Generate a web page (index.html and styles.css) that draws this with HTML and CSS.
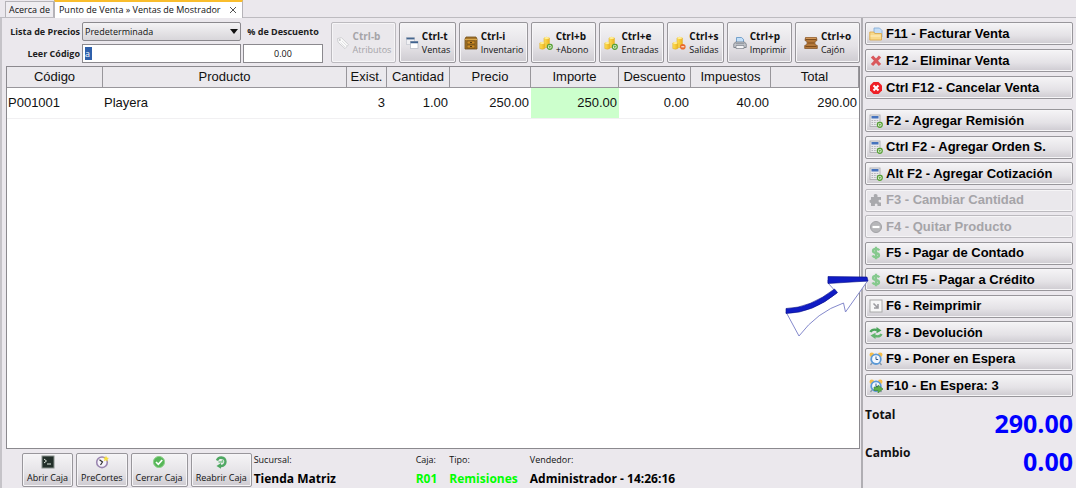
FILE: index.html
```html
<!DOCTYPE html>
<html lang="es">
<head>
<meta charset="utf-8">
<title>Punto de Venta » Ventas de Mostrador</title>
<link rel="stylesheet" href="styles.css">
</head>
<body>
<svg class="defs" aria-hidden="true">
  <defs>
    <linearGradient id="gold" x1="0" x2="1"><stop offset="0" stop-color="#fce056"/><stop offset="1" stop-color="#eeb421"/></linearGradient>
    <symbol id="coins" viewBox="0 0 14 14">
      <path d="M5 2q2.700-1.500 5.400 0v9.500H5z" fill="url(#gold)" stroke="#dfae2c" stroke-width=".6"/>
      <path d="M.8 7q2.300-1.400 5 0v5.500q-2.500 1.300-5 0z" fill="url(#gold)" stroke="#dfae2c" stroke-width=".6"/>
      <ellipse cx="7.700" cy="2.100" rx="2.500" ry="1" fill="#fff09b"/><ellipse cx="3.300" cy="7" rx="2.300" ry=".9" fill="#fff09b"/>
    </symbol>
    <symbol id="plus" viewBox="0 0 6 6"><circle cx="3" cy="3" r="2.300" fill="#fff" stroke="#57a135" stroke-width="1.200"/><path d="M3 1.800v2.400M1.800 3h2.400" stroke="#57a135" stroke-width=".8"/></symbol>
    <symbol id="calc" viewBox="0 0 14 14">
      <rect x="1" y="1" width="10" height="11.500" fill="#e9e9ec" stroke="#a5a5aa" stroke-width=".8"/>
      <rect x="2.500" y="2" width="7" height="2.500" fill="#4673bd"/>
      <path d="M2.500 6.500h7M2.500 8.500h7M2.500 10.500h7" stroke="#b4b4ba" stroke-width="1" stroke-dasharray="1.600 1"/>
      <use href="#plus" x="7.500" y="7.500" width="6.500" height="6.500"/>
    </symbol>
    <symbol id="dollar" viewBox="0 0 14 14"><path d="M10.300 4.400Q9.500 2.900 7 2.900 4 2.900 4 4.900 4 6.500 7 7t3 2.300q0 2-3 2-2.700 0-3.500-1.700M7 .8v12.400" fill="none" stroke="#86c98e" stroke-width="2.300"/></symbol>
    <symbol id="alarm" viewBox="0 0 14 14">
      <circle cx="2.800" cy="2.800" r="2.300" fill="#f5bd4a"/><circle cx="11.200" cy="2.800" r="2.300" fill="#f5bd4a"/>
      <path d="M3 11l-1.500 2M11 11l1.500 2" stroke="#8a98a8" stroke-width="1.300"/>
      <circle cx="7" cy="7.200" r="4.800" fill="#f4f9ff" stroke="#5b99d6" stroke-width="1.800"/>
      <path d="M7 4.500v3h2.200" fill="none" stroke="#345c8c"/>
    </symbol>
  </defs>
</svg>
<div class="app">
  <nav class="tabs">
    <button class="tab">Acerca de</button>
    <div class="tab tab-active"><button class="tab-name">Punto de Venta » Ventas de Mostrador</button><button class="tab-close" aria-label="Cerrar"><svg viewBox="0 0 8 8"><path d="M1 1l6 6M7 1L1 7" stroke="#555" fill="none"/></svg></button></div>
  </nav>
  <div class="workspace">
    <main class="sale">
      <div class="toolbar">
        <form class="entry">
          <label class="entry-label" for="lista">Lista de Precios</label>
          <div class="select-wrap"><select id="lista" class="field select"><option>Predeterminada</option></select></div>
          <label class="entry-label discount-label" for="descuento">% de Descuento</label>
          <label class="entry-label" for="codigo">Leer Código</label>
          <div class="field code-field"><input id="codigo" class="code" value="a"></div>
          <input id="descuento" class="field discount" value="0.00">
        </form>
        <div class="actions">
          <button class="btn action wide-64" disabled><svg class="icon" viewBox="0 0 14 14"><path d="M1.500 2.500l4-.8 7 7-3.500 4-7-6.500z" fill="#fafafa" stroke="#cfcfd2"/><circle cx="3.800" cy="4" r="1" fill="#c6c6ca"/><path d="M6 5l5 5M4.500 6.500l4.500 4.500" stroke="#d6d6da" stroke-width=".7"/></svg><span><b>Ctrl-b</b><br>Atributos</span></button>
          <button class="btn action wide-56"><svg class="icon" viewBox="0 0 14 14"><rect x="1.500" y="1.500" width="8" height="7" fill="#f1f1f4" stroke="#c3c7cf" stroke-width=".7"/><path d="M1.500 2.500h8" stroke="#46678f" stroke-width="1.800"/><rect x="5.500" y="5.500" width="7.500" height="7" fill="#fff" stroke="#b4b9c4" stroke-width=".7"/><path d="M5.500 6.300h7.500" stroke="#3f628f" stroke-width="1.900"/></svg><span><b>Ctrl-t</b><br>Ventas</span></button>
          <button class="btn action wide-68"><svg class="icon" viewBox="0 0 14 14"><path d="M2 1h10l1 2v10H1V3z" fill="#a9782c" stroke="#6d4a14" stroke-width=".8"/><path d="M1 3.500h12" stroke="#d9a94d"/><rect x="3" y="5" width="8" height="3" fill="#d08e27" stroke="#6d4a14" stroke-width=".7"/><rect x="3" y="9" width="8" height="3" fill="#d08e27" stroke="#6d4a14" stroke-width=".7"/><path d="M6 6.500h2M6 10.500h2" stroke="#4e3510"/></svg><span><b>Ctrl-i</b><br>Inventario</span></button>
          <button class="btn action wide-64"><svg class="icon" viewBox="0 0 14 14"><use href="#coins"/><use href="#plus" x="7.500" y="7.500" width="6.500" height="6.500"/></svg><span><b>Ctrl+b</b><br>+Abono</span></button>
          <button class="btn action wide-64"><svg class="icon" viewBox="0 0 14 14"><use href="#coins"/><use href="#plus" x="7.500" y="7.500" width="6.500" height="6.500"/></svg><span><b>Ctrl+e</b><br>Entradas</span></button>
          <button class="btn action wide-56"><svg class="icon" viewBox="0 0 14 14"><use href="#coins"/><circle cx="10.800" cy="10.800" r="2.800" fill="#e8692b"/><path d="M9.300 10.800h3" stroke="#fff"/></svg><span><b>Ctrl+s</b><br>Salidas</span></button>
          <button class="btn action wide-64"><svg class="icon" viewBox="0 0 14 14"><path d="M3.500 7V1.500h5l2 1.800V7z" fill="#c3dff8" stroke="#5c91c2" stroke-width=".8"/><path d="M2.500 6h9l1.700 2v3.500H.8V8z" fill="#c9ccd1" stroke="#70757d" stroke-width=".8"/><path d="M3 9.500h8v3H3z" fill="#f3f3f5" stroke="#7a7f88" stroke-width=".7"/><path d="M2.500 7.700h9" stroke="#8c929b"/></svg><span><b>Ctrl+p</b><br>Imprimir</span></button>
          <button class="btn action wide-64"><svg class="icon" viewBox="0 0 14 14"><path d="M1.500 1.500h11l.5 3-2 1v3l2.300 1v3H.7v-3L3 8.500v-3l-2-1z" fill="#b5793b" stroke="#7d4c1c" stroke-width=".7"/><path d="M1.500 3.500h11M1.500 10.500h11M4 7h6" stroke="#7d4c1c"/><path d="M2 2.300h10" stroke="#daa062"/></svg><span><b>Ctrl+o</b><br>Cajón</span></button>
        </div>
      </div>
      <div class="grid">
        <table class="items">
          <colgroup><col class="w-96"><col><col class="w-40"><col class="w-63"><col class="w-81"><col class="w-88"><col class="w-72"><col class="w-80"><col class="w-88"></colgroup>
          <thead><tr><th>Código</th><th>Producto</th><th>Exist.</th><th>Cantidad</th><th>Precio</th><th>Importe</th><th>Descuento</th><th>Impuestos</th><th>Total</th></tr></thead>
          <tbody><tr><td class="text">P001001</td><td class="text">Playera</td><td>3</td><td>1.00</td><td>250.00</td><td class="amount">250.00</td><td>0.00</td><td>40.00</td><td>290.00</td></tr></tbody>
        </table>
      </div>
      <footer class="status">
        <div class="register">
          <button class="btn reg"><svg class="icon" viewBox="0 0 14 14"><rect x="1" y="1" width="12" height="12" fill="#23302a" stroke="#88908b"/><path d="M3 4l2.500 2L3 8M6 9h4" fill="none" stroke="#dfe8df"/></svg>Abrir Caja</button>
          <button class="btn reg"><svg class="icon" viewBox="0 0 14 14"><circle cx="7" cy="7.300" r="5.300" fill="#f6f3fa" stroke="#9a86b0" stroke-width="1.600"/><path d="M4.500 4.800L7.500 7l-2 3" fill="none" stroke="#333" stroke-width="1.200"/><path d="M11 .5l.8 2 2.200.5-1.600 1.300.4 2.200L11 5.300l-2 1 .5-2.200L8 2.700l2.200-.2z" fill="#f5df3e"/></svg>PreCortes</button>
          <button class="btn reg"><svg class="icon" viewBox="0 0 14 14"><circle cx="7" cy="7" r="5.600" fill="#56b657" stroke="#8fd08c"/><path d="M4 7l2.300 2.300L10.200 5" fill="none" stroke="#fff" stroke-width="1.700"/></svg>Cerrar Caja</button>
          <button class="btn reg"><svg class="icon" viewBox="0 0 14 14"><path d="M3 5.500Q4 2.500 7.300 2.500q4 .3 4.200 4.200-.3 4-4.200 4.300H6" fill="none" stroke="#4fa863" stroke-width="2.400"/><path d="M7 8v5.800L2.500 11z" fill="#4fa863"/><path d="M4.500 7h4V4.500" fill="none" stroke="#7cc58a" stroke-width="1.500"/></svg>Reabrir Caja</button>
        </div>
        <dl class="info">
          <div class="info-item branch"><dt>Sucursal:</dt><dd>Tienda Matriz</dd></div>
          <div class="info-item"><dt>Caja:</dt><dd class="live">R01</dd></div>
          <div class="info-item"><dt>Tipo:</dt><dd class="live">Remisiones</dd></div>
          <div class="info-item"><dt>Vendedor:</dt><dd>Administrador - 14:26:16</dd></div>
        </dl>
      </footer>
    </main>
    <aside class="side">
      <div class="group">
        <button class="btn cmd"><svg class="icon" viewBox="0 0 14 14"><path d="M5 1h5.500L13 3.500V10H5z" fill="#c5ddf5" stroke="#7ca7d6" stroke-width=".8"/><path d="M.8 5h4l1 1.500h6.700V13H.8z" fill="#f8d98a" stroke="#d9a441" stroke-width=".8"/><path d="M1.500 9h10" stroke="#fff0c4"/></svg>F11 - Facturar Venta</button>
        <button class="btn cmd"><svg class="icon" viewBox="0 0 14 14"><path d="M3 2.500l8 8.500M11 2.500L3 11" stroke="#d9585c" stroke-width="3.200"/></svg>F12 - Eliminar Venta</button>
        <button class="btn cmd"><svg class="icon" viewBox="0 0 14 14"><path d="M4.500 1h5L13 4.500v5L9.500 13h-5L1 9.500v-5z" fill="#ee1f26"/><path d="M4.500 4.500l5 5M9.500 4.500l-5 5" stroke="#fff" stroke-width="2"/></svg>Ctrl F12 - Cancelar Venta</button>
      </div>
      <div class="group group-main">
        <button class="btn cmd"><svg class="icon"><use href="#calc"/></svg>F2 - Agregar Remisión</button>
        <button class="btn cmd"><svg class="icon"><use href="#calc"/></svg>Ctrl F2 - Agregar Orden S.</button>
        <button class="btn cmd"><svg class="icon"><use href="#calc"/></svg>Alt F2 - Agregar Cotización</button>
        <button class="btn cmd" disabled><svg class="icon" viewBox="0 0 14 14"><path d="M2 4h3q-1-3 1.500-3T8.500 4H12v3q-2.500-.8-2.500 1T12 9.500V13H8.500q.6-2.500-1.300-2.500T6 13H2V9.800q-1.500.5-1.500-1.500T2 7z" fill="#a9a9ad"/></svg>F3 - Cambiar Cantidad</button>
        <button class="btn cmd" disabled><svg class="icon" viewBox="0 0 14 14"><circle cx="7" cy="7" r="5.500" fill="#b6b6b9" stroke="#a2a2a6"/><path d="M3.500 7h7" stroke="#fff" stroke-width="2.200"/></svg>F4 - Quitar Producto</button>
        <button class="btn cmd"><svg class="icon"><use href="#dollar"/></svg>F5 - Pagar de Contado</button>
        <button class="btn cmd"><svg class="icon"><use href="#dollar"/></svg>Ctrl F5 - Pagar a Crédito</button>
        <button class="btn cmd"><svg class="icon" viewBox="0 0 14 14"><rect x="1" y="1" width="12" height="12" fill="#f7f7f7" stroke="#aaa"/><path d="M4.500 4.500l4 4M9 5v4H5" fill="none" stroke="#9c9ca0" stroke-width="1.600"/></svg>F6 - Reimprimir</button>
        <button class="btn cmd"><svg class="icon" viewBox="0 0 14 14"><path d="M1.500 6Q3 2.700 8 4" fill="none" stroke="#4ba45a" stroke-width="2.400"/><path d="M7.500 1l5 3.500-5 2.800z" fill="#4ba45a"/><path d="M12.500 8Q11 11.300 6 10" fill="none" stroke="#62b56e" stroke-width="2.400"/><path d="M6.500 13l-5-3.500 5-2.800z" fill="#62b56e"/></svg>F8 - Devolución</button>
        <button class="btn cmd"><svg class="icon"><use href="#alarm"/></svg>F9 - Poner en Espera</button>
        <button class="btn cmd"><svg class="icon" viewBox="0 0 14 14"><use href="#alarm"/><path d="M5 8h4V6l5 4-5 4v-2.500H5z" fill="#5cb04a" stroke="#3c8332" stroke-width=".6"/></svg>F10 - En Espera: 3</button>
      </div>
      <dl class="totals">
        <div class="total-row"><dt>Total</dt><dd>290.00</dd></div>
        <div class="total-row"><dt>Cambio</dt><dd>0.00</dd></div>
      </dl>
    </aside>
  </div>
  <svg class="pointer" viewBox="0 0 84 61" aria-hidden="true">
    <path d="M43 4L82.500 5L60.500 36L58.500 27Q32 36 14 60L1 36Q28 36 52 17L43 7z" fill="#fff" stroke="#8489cc" stroke-width="1"/>
    <path d="M43 .5L82 1L83 5L43 7.500zM1 32.500Q25 32 49.500 13L52.500 16.500Q28 37 1 37.500z" fill="#101cc4" stroke="#090f87" stroke-width=".6"/>
  </svg>
</div>
</body>
</html>
```
FILE: styles.css
```css
* { box-sizing: border-box; }
body {
  margin: 0;
  background: #ebe8ed;
  color: #111;
  font: 9px/14px "Open Sans", "Noto Sans", sans-serif;
}
button, input, select { font: inherit; color: inherit; margin: 0; }
dl, dd { margin: 0; }
.defs { position: absolute; width: 0; height: 0; }
.app { position: relative; display: flex; flex-direction: column; min-height: 100vh; }

.tabs {
  display: flex;
  align-items: flex-end;
  height: 18px;
  padding-left: 5px;
  border-bottom: 1px solid #bdbbc0;
}
.tab {
  height: 16px;
  padding: 0 3px;
  border: 1px solid #b5b3b8;
  border-bottom: 0;
  background: #efedf1;
  white-space: nowrap;
}
.tab-active {
  display: flex;
  align-items: center;
  gap: 8px;
  height: 18px;
  margin-bottom: -1px;
  padding: 0 5px 0 4px;
  border-top: 2px solid #f9bd2d;
  background: #fff;
}
.tab-name, .tab-close { padding: 0; border: 0; background: none; }
.tab-close { display: flex; }
.tab-close svg { width: 8px; height: 8px; }

.workspace { flex: 1; display: flex; border-left: 2px solid #c5c3c8; }
.sale {
  flex: 1;
  min-width: 0;
  display: flex;
  flex-direction: column;
  padding: 4px 1px 1px 4px;
  border-right: 2px solid #b0aeb3;
}

.btn {
  border: 1px solid #98969b;
  border-radius: 2px;
  background: linear-gradient(#f5f4f6, #e4e2e6 60%, #cecbd1);
  box-shadow: inset 0 0 0 1px #f6f5f7;
}
.btn:disabled { color: #a5a4a8; border-color: #bcbabf; background: #eae8ec; }
.icon { flex: none; width: 14px; height: 14px; }

.toolbar { display: flex; justify-content: space-between; gap: 8px; margin-bottom: 3px; }
.entry {
  flex: 1;
  display: grid;
  grid-template-columns: 74px 1fr 80px;
  column-gap: 2px;
  row-gap: 3px;
  align-items: center;
}
.entry-label { font-weight: 700; text-align: right; white-space: nowrap; color: #1d1d22; }
.discount-label { text-align: center; }
.field { height: 19px; width: 100%; border: 1px solid #8b898e; background: #fff; }
.select-wrap { position: relative; }
.select-wrap::after {
  content: "";
  position: absolute;
  right: 3px;
  top: 7px;
  border: 4px solid transparent;
  border-top: 5px solid #111;
  border-bottom: 0;
  pointer-events: none;
}
.select { display: block; appearance: none; padding: 0 2px; border-radius: 2px; background: linear-gradient(#f4f3f5, #d8d6da); }
.code-field { padding: 2px; display: flex; }
.code { width: 7px; padding: 0; border: 0; background: #2f60ab; color: #fff; }
.discount { text-align: center; }

.actions { display: flex; gap: 3px; }
.action {
  display: flex;
  align-items: center;
  justify-content: center;
  gap: 3px;
  height: 41px;
  padding: 0;
  text-align: left;
  line-height: 13px;
  white-space: nowrap;
}
.action b { font-size: 10px; }
.wide-56 { width: 57px; }
.wide-64 { width: 65px; }
.wide-68 { width: 69px; }

.grid { flex: 1; background: #fff; border: 1px solid #8b898e; }
.items {
  width: 100%;
  table-layout: fixed;
  border-collapse: separate;
  border-spacing: 0;
  font: 13px/20px "Liberation Sans", Arial, sans-serif;
}
.w-40 { width: 40px; }
.w-63 { width: 63px; }
.w-72 { width: 72px; }
.w-80 { width: 80px; }
.w-81 { width: 81px; }
.w-88 { width: 88px; }
.w-96 { width: 96px; }
.items th {
  height: 21px;
  padding: 0;
  border-right: 1px solid #98969b;
  border-bottom: 1px solid #98969b;
  background: #ebe9ed;
  font-weight: 400;
}
.items td { height: 31px; padding: 0 2px 0 1px; border-bottom: 1px solid #f1f0f2; text-align: right; }
.items .text { text-align: left; }
.items .amount { background: #ccffcc; }

.status { display: flex; gap: 2px; padding: 4px 0 0 16px; }
.register { display: flex; gap: 3px; }
.reg {
  display: flex;
  flex-direction: column;
  align-items: center;
  gap: 2px;
  height: 34px;
  padding: 1px 4px;
  white-space: nowrap;
}
.info { display: flex; gap: 12px; white-space: nowrap; }
.info dd {
  margin-top: 4px;
  font-size: 12px;
  line-height: 16px;
  font-weight: 700;
  color: #000;
}
.branch { width: 150px; }
.info .live { color: #0f0; }

.side { width: 213px; display: flex; flex-direction: column; gap: 10px; padding: 4px 3px 9px 2px; }
.group { display: flex; flex-direction: column; gap: 4px; }
.group-main { flex: 1; gap: 0; justify-content: space-between; }
.cmd {
  display: flex;
  align-items: center;
  gap: 3px;
  height: 23px;
  padding: 0 3px;
  font: 700 13px/20px "Liberation Sans", Arial, sans-serif;
  color: #000;
  white-space: nowrap;
}
.totals { display: flex; flex-direction: column; gap: 4px; }
.total-row { display: flex; justify-content: space-between; height: 34px; font-weight: 700; }
.total-row dt { font-size: 12px; line-height: 16px; }
.total-row dd { font-size: 25px; line-height: 32px; color: #00f; }

.pointer { position: absolute; left: 785px; top: 276px; width: 84px; height: 61px; }
```
